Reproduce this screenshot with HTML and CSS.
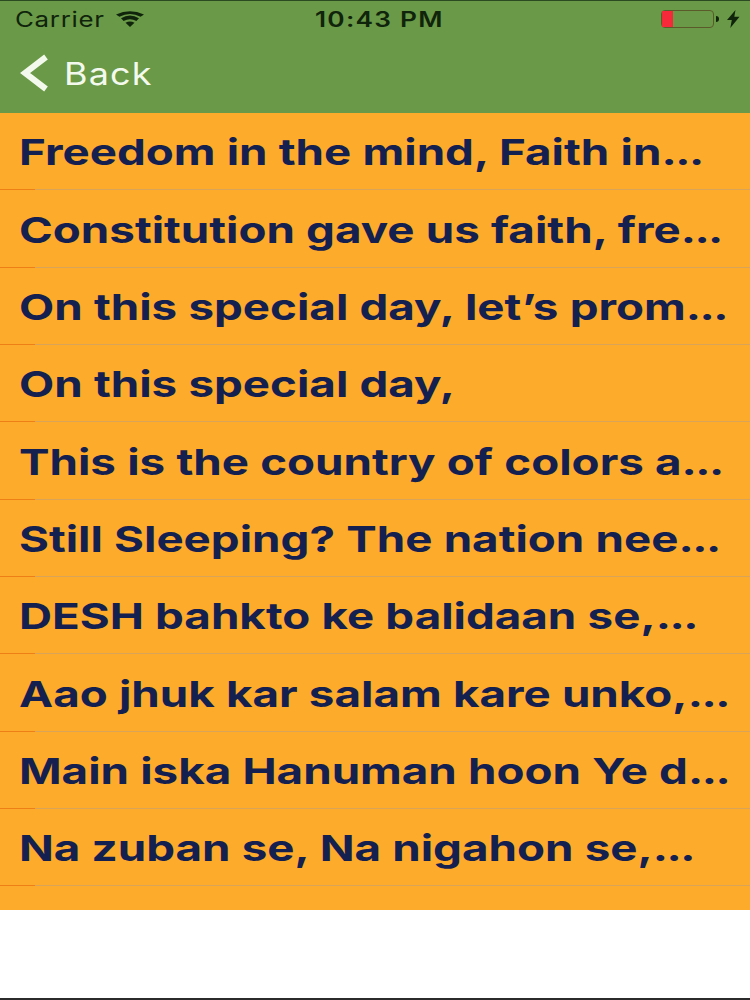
FILE: index.html
```html
<!DOCTYPE html>
<html lang="en">
<head>
<meta charset="utf-8">
<title>Messages</title>
<link rel="stylesheet" href="styles.css">
</head>
<body>
<div class="screen">
  <header class="header">
    <div class="status">
      <div class="status-left">
        <span class="carrier">Carrier</span>
        <svg class="wifi" width="28" height="16" viewBox="0 0 28 16"><path d="M14 16 9.500 11.800Q14 9.200 18.500 11.800Z" fill="#10240c"/><path d="M7.600 10 5 7.300Q14 1.800 23 7.300L20.400 10Q14 6.500 7.600 10Z" fill="#10240c"/><path d="M3.400 5.800 0 3.600Q14-3.200 28 3.600L24.600 5.800Q14 .3 3.400 5.800Z" fill="#10240c"/></svg>
      </div>
      <span class="time">10:43 PM</span>
      <div class="status-right">
        <div class="battery"><div class="battery-level"></div></div>
        <div class="battery-tip"></div>
        <svg class="bolt" width="13" height="18" viewBox="0 0 13 18"><path d="M8.500 0 0 10h4.800L3.300 18 12.500 6.800H7.300Z" fill="#10240c"/></svg>
      </div>
    </div>
    <nav class="nav">
      <svg class="chevron" width="34" height="40" viewBox="0 0 34 40"><path d="M27 4 6 20l21 16" fill="none" stroke="#f4f9ee" stroke-width="6"/></svg>
      <span class="back">Back</span>
    </nav>
  </header>
  <ul class="list">
    <li class="row"><span class="row-text">Freedom in the mind, Faith in<span class="dots">...</span></span></li>
    <li class="row"><span class="row-text">Constitution gave us faith, fre<span class="dots">...</span></span></li>
    <li class="row"><span class="row-text">On this special day, let’s prom<span class="dots">...</span></span></li>
    <li class="row"><span class="row-text">On this special day,</span></li>
    <li class="row"><span class="row-text">This is the country of colors a<span class="dots">...</span></span></li>
    <li class="row"><span class="row-text">Still Sleeping? The nation nee<span class="dots">...</span></span></li>
    <li class="row"><span class="row-text">DESH bahkto ke balidaan se,<span class="dots">...</span></span></li>
    <li class="row"><span class="row-text">Aao jhuk kar salam kare unko,<span class="dots">...</span></span></li>
    <li class="row"><span class="row-text">Main iska Hanuman hoon Ye d<span class="dots">...</span></span></li>
    <li class="row"><span class="row-text">Na zuban se, Na nigahon se,<span class="dots">...</span></span></li>
  </ul>
  <div class="blank"></div>
</div>
</body>
</html>
```
FILE: styles.css
```css
* { box-sizing: border-box; }
html, body { margin: 0; padding: 0; background: #fff; }
body { font-family: Inter, "Liberation Sans", sans-serif; }
.screen { width: 750px; height: 1000px; display: flex; flex-direction: column; overflow: hidden; border-bottom: 2px solid #2b2b2b; }
.header { height: 113px; flex: none; background: #6a9a47; border-top: 1px solid #2c4a22; }
.status { height: 36px; display: flex; align-items: center; justify-content: space-between; position: relative; padding: 0 10px 0 15px; color: #10240c; }
.status-left { display: flex; align-items: center; gap: 30px; }
.carrier { display: inline-block; font-size: 21px; letter-spacing: .6px; transform: scaleX(1.23); transform-origin: left center; }
.wifi { margin-left: -2px; }
.time { position: absolute; left: 315px; font-size: 21px; font-weight: 600; letter-spacing: 1px; transform: scaleX(1.25); transform-origin: left center; }
.status-right { display: flex; align-items: center; }
.battery { width: 53px; height: 18px; border: 1.500px solid #5b5a2a; border-radius: 4px; }
.battery-level { width: 11px; height: 100%; background: #f5293a; }
.battery-tip { width: 3px; height: 6px; margin-left: 2px; background: #10240c; border-radius: 0 3px 3px 0; }
.bolt { margin-left: 8px; }
.nav { height: 76px; display: flex; align-items: center; padding: 0 0 4px 19px; gap: 11px; }
.back { display: inline-block; font-size: 31px; color: #f4f9ee; letter-spacing: 1px; transform: scaleX(1.16); transform-origin: left center; }
.list { list-style: none; margin: 0; padding: 0 0 24px; background: #fdab2b; flex: none; }
.row { height: 77.350px; display: flex; align-items: center; padding: 2px 0 0 19px; position: relative; border-bottom: 1px solid #d9a458; }
.row::after { content: ""; position: absolute; left: 0; bottom: -1px; width: 35px; height: 1px; background: #ee7f16; }
.row-text { display: inline-block; font-size: 36px; font-weight: 700; color: #14204f; white-space: nowrap; word-spacing: .3px; transform: scaleX(1.27); transform-origin: left center; }
.dots { letter-spacing: -1.2px; }
.blank { flex: 1; background: #fff; }
```
